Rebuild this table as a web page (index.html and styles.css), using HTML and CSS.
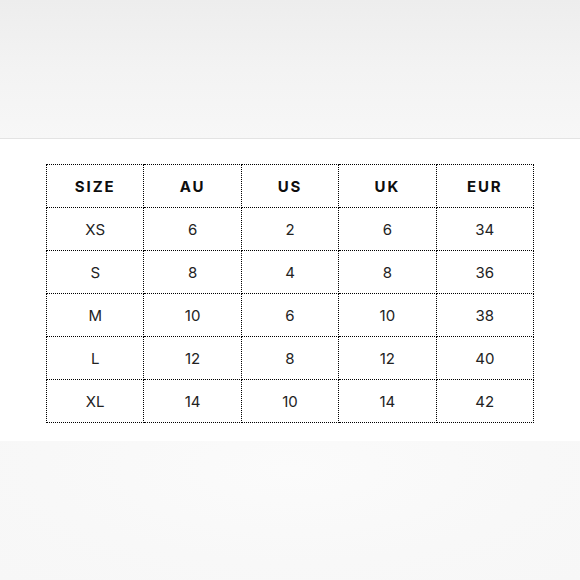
FILE: index.html
```html
<!DOCTYPE html>
<html>
<head>
<meta charset="utf-8">
<link rel="stylesheet" href="styles.css">
</head>
<body>
<div class="top"></div>
<div class="middle">
  <table class="chart">
    <thead>
      <tr><th>SIZE</th><th>AU</th><th>US</th><th>UK</th><th>EUR</th></tr>
    </thead>
    <tbody>
      <tr><td>XS</td><td>6</td><td>2</td><td>6</td><td>34</td></tr>
      <tr><td>S</td><td>8</td><td>4</td><td>8</td><td>36</td></tr>
      <tr><td>M</td><td>10</td><td>6</td><td>10</td><td>38</td></tr>
      <tr><td>L</td><td>12</td><td>8</td><td>12</td><td>40</td></tr>
      <tr><td>XL</td><td>14</td><td>10</td><td>14</td><td>42</td></tr>
    </tbody>
  </table>
</div>
<div class="bottom"></div>
</body>
</html>
```
FILE: styles.css
```css
html, body {
  margin: 0;
  padding: 0;
  background: #ffffff;
}
body {
  width: 580px;
  height: 580px;
  overflow: hidden;
  display: flex;
  flex-direction: column;
}
.top {
  height: 138px;
  background: linear-gradient(to bottom, #ededed 0%, #f3f3f3 50%, #f7f7f7 100%);
  border-bottom: 1px solid #e3e3e3;
  flex: none;
}
.middle {
  height: 302px;
  padding: 25px 0 0 46px;
  box-sizing: border-box;
  background: #ffffff;
  flex: none;
}
.bottom {
  flex: 1;
  background: radial-gradient(ellipse at 50% 20%, #fbfbfb 0%, #f8f8f8 60%, #f7f7f7 100%);
}
.chart {
  border-collapse: collapse;
  table-layout: fixed;
  width: 488px;
  font-family: "Inter", "Liberation Sans", sans-serif;
  color: #1a1a1a;
}
.chart th, .chart td {
  border: 1px dotted #000;
  text-align: center;
  height: 43px;
  padding: 0;
  box-sizing: border-box;
}
.chart th {
  font-weight: 700;
  font-size: 15px;
  letter-spacing: 1.9px;
  color: #0d0d0d;
}
.chart td {
  font-weight: 400;
  font-size: 15px;
  color: #222;
}
```
